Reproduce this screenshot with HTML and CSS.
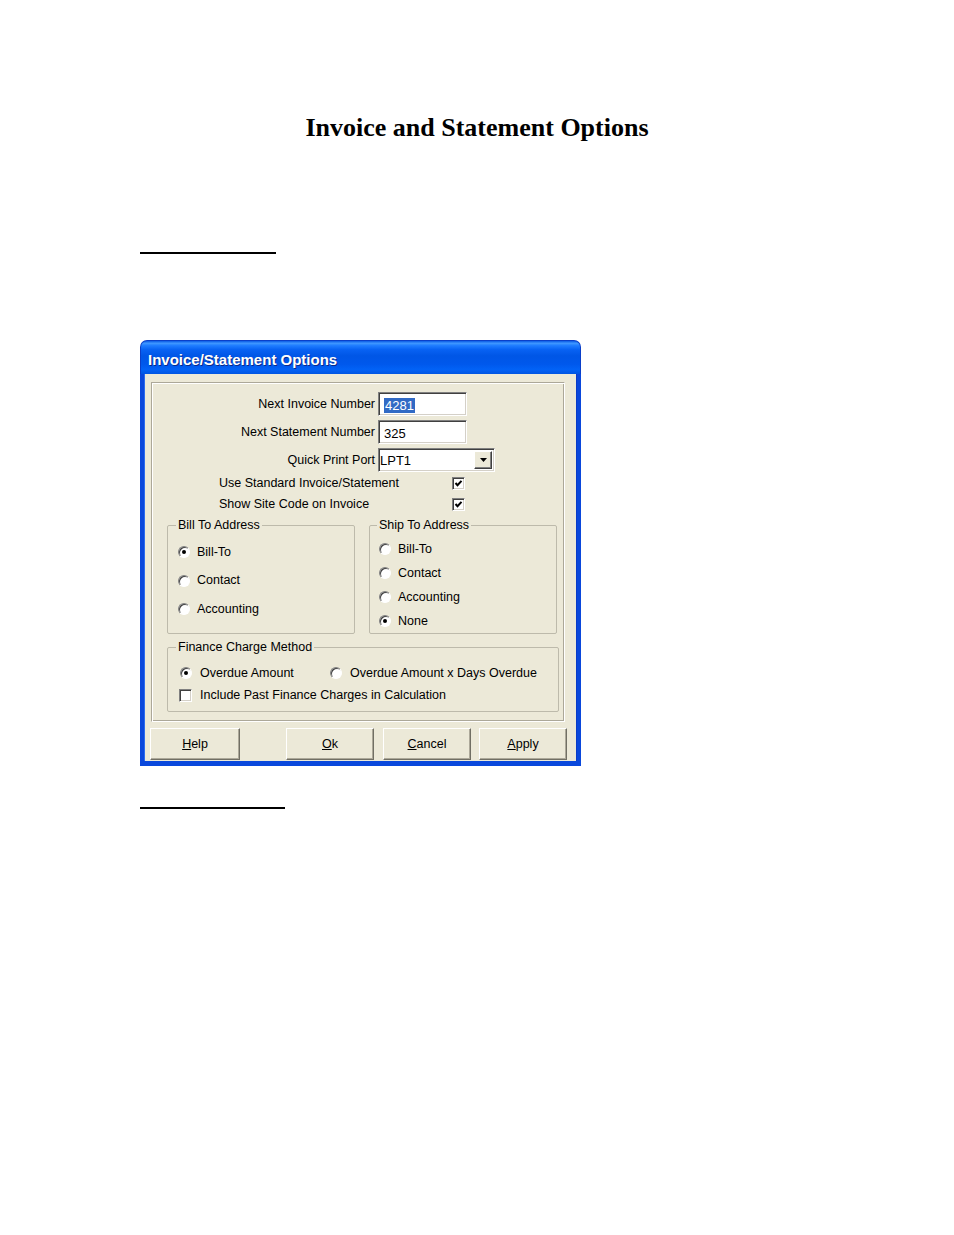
FILE: index.html
```html
<!DOCTYPE html>
<html>
<head>
<meta charset="utf-8">
<title>Invoice and Statement Options</title>
<link rel="stylesheet" href="styles.css">
</head>
<body>
<h1 class="page-title">Invoice and Statement Options</h1>
<div class="rule rule-top"></div>

<div class="dialog">
  <div class="titlebar">Invoice/Statement Options</div>
  <div class="dialog-body">
    <div class="panel">
      <div class="fields">
        <div class="field-row">
          <span class="field-label">Next Invoice Number</span>
          <span class="textbox"><span class="sel">4281</span></span>
        </div>
        <div class="field-row">
          <span class="field-label">Next Statement Number</span>
          <span class="textbox">325</span>
        </div>
        <div class="field-row">
          <span class="field-label">Quick Print Port</span>
          <span class="combo">
            <span class="combo-text">LPT1</span>
            <span class="combo-btn"><svg width="7" height="4" viewBox="0 0 7 4"><polygon points="0,0 7,0 3.5,4" fill="#000"/></svg></span>
          </span>
        </div>
      </div>
      <div class="checks">
        <div class="check-row">
          <span class="check-label">Use Standard Invoice/Statement</span>
          <span class="checkbox"><svg width="9" height="9" viewBox="0 0 9 9"><polyline points="1.5,4 3.5,6.2 7.5,1.8" fill="none" stroke="#000" stroke-width="2"/></svg></span>
        </div>
        <div class="check-row">
          <span class="check-label">Show Site Code on Invoice</span>
          <span class="checkbox"><svg width="9" height="9" viewBox="0 0 9 9"><polyline points="1.5,4 3.5,6.2 7.5,1.8" fill="none" stroke="#000" stroke-width="2"/></svg></span>
        </div>
      </div>
      <div class="groups">
        <fieldset class="group group-bill">
          <legend>Bill To Address</legend>
          <div class="opt opt-bill"><span class="radio on"></span>Bill-To</div>
          <div class="opt opt-bill"><span class="radio"></span>Contact</div>
          <div class="opt opt-bill"><span class="radio"></span>Accounting</div>
        </fieldset>
        <fieldset class="group group-ship">
          <legend>Ship To Address</legend>
          <div class="opt opt-ship"><span class="radio"></span>Bill-To</div>
          <div class="opt opt-ship"><span class="radio"></span>Contact</div>
          <div class="opt opt-ship"><span class="radio"></span>Accounting</div>
          <div class="opt opt-ship"><span class="radio on"></span>None</div>
        </fieldset>
      </div>
      <fieldset class="group group-finance">
        <legend>Finance Charge Method</legend>
        <div class="fin-row">
          <div class="opt fin-opt1"><span class="radio on"></span>Overdue Amount</div>
          <div class="opt"><span class="radio"></span>Overdue Amount x Days Overdue</div>
        </div>
        <div class="fin-row">
          <span class="checkbox fin-check"></span>Include Past Finance Charges in Calculation
        </div>
      </fieldset>
    </div>
    <div class="buttons">
      <button class="btn btn-help"><u>H</u>elp</button>
      <button class="btn btn-ok"><u>O</u>k</button>
      <button class="btn btn-cancel"><u>C</u>ancel</button>
      <button class="btn btn-apply"><u>A</u>pply</button>
    </div>
  </div>
</div>

<div class="rule rule-bottom"></div>
</body>
</html>
```
FILE: styles.css
```css
* { box-sizing: border-box; }

body {
  margin: 0;
  background: #fff;
  color: #000;
  font-family: "Liberation Sans", Arial, sans-serif;
}

.page-title {
  margin: 113px 0 0;
  font: bold 26px/30px "Liberation Serif", "Times New Roman", serif;
  text-align: center;
}

.rule {
  height: 2px;
  background: #000;
  margin-left: 140px;
}
.rule-top { width: 136px; margin-top: 109px; }
.rule-bottom { width: 145px; margin-top: 41px; }

.dialog {
  margin: 86px 0 0 140px;
  width: 441px;
}

.titlebar {
  height: 34px;
  border-radius: 7px 7px 0 0;
  background: linear-gradient(to bottom, #0b5be6 0%, #3f97ff 7%, #1e7cff 14%, #0862f3 26%, #0056e6 45%, #0058ec 70%, #0262f6 86%, #0055e2 100%);
  border: 1px solid #0a3fc9;
  border-bottom: 0;
  color: #fff;
  font: bold 15px/18px "Liberation Sans", Arial, sans-serif;
  padding: 10px 0 0 7px;
  text-shadow: 1px 1px 0 #0a2a8a;
}

.dialog-body {
  background: #ece9d8;
  border: 4px solid #0a48dc;
  border-top: 0;
  border-bottom-width: 5px;
  box-shadow: inset 1px 0 0 #2c6cf0, inset -1px 0 0 #0a3cc8;
  height: 392px;
  padding-top: 8px;
  font-size: 12.5px;
  line-height: 15px;
}

.panel {
  margin-left: 7px;
  width: 414px;
  height: 340px;
  border: 1px solid;
  border-color: #aca899 #fff #fff #aca899;
  box-shadow: inset 1px 1px 0 #fff, inset -1px -1px 0 #aca899;
  padding-top: 9px;
}

.fields {
  display: flex;
  flex-direction: column;
  gap: 4px;
}

.field-row {
  display: flex;
  align-items: center;
  height: 24px;
}

.field-label {
  width: 223px;
  text-align: right;
  margin-right: 3px;
}

.textbox {
  width: 89px;
  height: 24px;
  background: #fff;
  border: 1px solid;
  border-color: #808080 #fff #fff #808080;
  box-shadow: inset 1px 1px 0 #404040, inset -1px -1px 0 #d4d0c8;
  padding: 5px 0 0 5px;
  font-size: 13px;
}

.sel {
  background: #316ac5;
  color: #fff;
  padding: 0 1px;
}

.combo {
  display: flex;
  width: 117px;
  height: 24px;
  background: #fff;
  border: 1px solid;
  border-color: #808080 #fff #fff #808080;
  box-shadow: inset 1px 1px 0 #404040, inset -1px -1px 0 #d4d0c8;
  padding: 2px;
}

.combo-text {
  flex: 1;
  font-size: 13px;
  padding-top: 2px;
  margin-left: -1px;
}

.combo-btn {
  width: 18px;
  display: flex;
  align-items: center;
  justify-content: center;
  background: #ece9d8;
  border: 1px solid;
  border-color: #fff #404040 #404040 #fff;
  box-shadow: inset -1px -1px 0 #808080;
}

.checks {
  margin-top: 1px;
}

.check-row {
  display: flex;
  align-items: center;
  height: 21px;
  padding-left: 67px;
}

.check-label {
  width: 233px;
}

.checkbox {
  width: 13px;
  height: 13px;
  background: #fff;
  border: 1px solid;
  border-color: #808080 #fff #fff #808080;
  box-shadow: inset 1px 1px 0 #404040, inset -1px -1px 0 #d4d0c8;
  display: flex;
  align-items: center;
  justify-content: center;
  flex: none;
}

.groups {
  display: flex;
  gap: 14px;
  margin-top: 3px;
  padding-left: 15px;
}

.group {
  margin: 0;
  min-width: 0;
  border: 1px solid #bdbaab;
  border-radius: 2px;
  padding: 4px 0 0 10px;
}

.group legend {
  padding: 0 2px;
  margin-left: -2px;
  line-height: 15px;
}

.group-bill {
  width: 188px;
  height: 116px;
  padding-top: 5px;
}

.group-ship {
  width: 188px;
  height: 116px;
  padding-left: 9px;
}

.opt {
  display: flex;
  align-items: center;
}

.opt-bill { height: 28.5px; }
.opt-ship { height: 24px; }

.radio {
  position: relative;
  width: 12px;
  height: 12px;
  flex: none;
  border-radius: 50%;
  background: #fff;
  border: 1px solid;
  border-color: #808080 #fff #fff #808080;
  box-shadow: inset 1px 1px 0 #404040;
  margin-right: 7px;
}

.radio.on::after {
  content: "";
  position: absolute;
  left: 3px;
  top: 3px;
  width: 4px;
  height: 4px;
  border-radius: 50%;
  background: #000;
}

.group-finance {
  width: 392px;
  height: 72px;
  margin: 6px 0 0 15px;
  padding: 7px 0 0 12px;
}

.group-finance legend {
  margin-left: -4px;
}

.fin-row {
  display: flex;
  align-items: center;
  height: 22px;
}

.fin-opt1 {
  width: 150px;
}

.group-finance .radio { margin-right: 8px; }

.fin-check {
  margin-left: -1px;
  margin-right: 8px;
}

.buttons {
  display: flex;
  margin-top: 6px;
  padding-left: 6px;
}

.btn {
  height: 32px;
  width: 88px;
  font: 12.5px/15px "Liberation Sans", Arial, sans-serif;
  color: #000;
  background: #ece9d8;
  border: 1px solid;
  border-color: #fff #716f64 #716f64 #fff;
  box-shadow: inset -1px -1px 0 #aca899;
  padding: 0;
}

.btn-help { width: 90px; }
.btn-ok { margin-left: 46px; }
.btn-cancel { margin-left: 9px; }
.btn-apply { margin-left: 8px; }
```
